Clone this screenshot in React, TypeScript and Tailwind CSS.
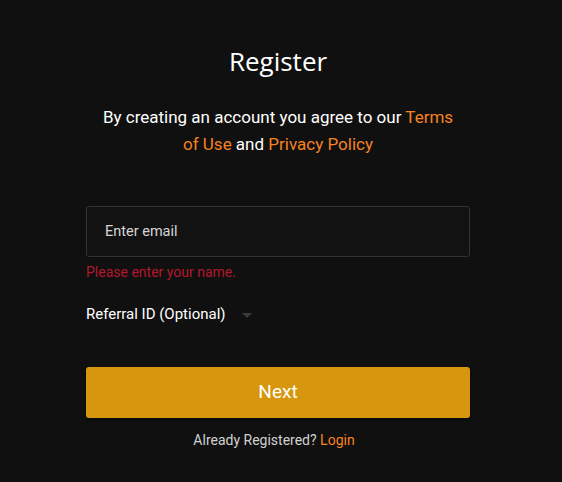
export default function App() {
  return (
    <div className="min-h-[482px] w-full bg-[#111010]" style={{ fontFamily: 'Roboto, "Liberation Sans", sans-serif' }}>
      <div className="ml-[86px] flex w-[384px] flex-col items-center pt-[44px]">
        <h1 className="text-[26px] leading-[34px] text-white" style={{ fontFamily: '"Open Sans", Inter, sans-serif' }}>
          Register
        </h1>
        <p className="mt-[26px] w-[370px] text-center text-[17px] leading-[27px] text-white">
          By creating an account you agree to our <span className="text-[#f5831f]">Terms of Use</span> and{' '}
          <span className="text-[#f5831f]">Privacy Policy</span>
        </p>

        <div className="mt-[48px] w-full">
          <input
            type="text"
            placeholder="Enter email"
            className="h-[51px] w-full rounded-[3px] border border-[#343334] bg-[#131213] px-[18px] text-[14.5px] text-white outline-none placeholder:text-[#d6d6d6]"
          />
          <p className="mt-[6px] text-[14px] leading-[18px] text-[#b3172d]">Please enter your name.</p>
        </div>

        <div className="mt-[23px] flex w-full items-center">
          <span className="text-[15px] leading-[20px] text-white">Referral ID (Optional)</span>
          <span className="ml-[16px] mt-[3px] h-0 w-0 border-x-[5px] border-t-[5px] border-x-transparent border-t-[#3a3a3a]" />
        </div>

        <button className="mt-[43px] h-[51px] w-full rounded-[3px] bg-[#d6970f] text-[19px] text-white shadow-[0_2px_4px_rgba(0,0,0,0.4)]">
          Next
        </button>
        <p className="mr-[8px] mt-[13px] text-[14px] leading-[18px] text-[#d0d0d0]">
          Already Registered? <span className="text-[#f5831f]">Login</span>
        </p>
      </div>
    </div>
  );
}
